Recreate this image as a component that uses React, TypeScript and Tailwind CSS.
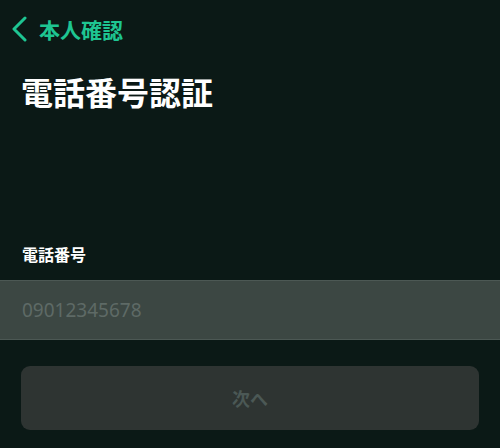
import React from "react";

const font = { fontFamily: '"Noto Sans CJK JP", "Noto Sans", sans-serif' };

const BackChevron = () => (
  <svg width="17" height="26" viewBox="0 0 17 26" fill="none" className="mr-[11px]">
    <path d="M14 2 L3 13 L14 24" stroke="#1ec592" strokeWidth="3" strokeLinecap="round" strokeLinejoin="round" />
  </svg>
);

export default function App() {
  return (
    <div className="w-[500px] h-[448px] bg-[#0b1916] overflow-hidden" style={font}>
      <div className="flex items-center pl-[11px] pt-[16px] h-[42px]">
        <BackChevron />
        <span className="text-[21px] font-bold text-[#1ec592] leading-none">本人確認</span>
      </div>

      <h1 className="px-[21px] mt-[33px] text-[32px] font-bold text-white leading-none">電話番号認証</h1>

      <label className="block px-[22px] mt-[139px] text-[16px] font-bold text-white leading-none">電話番号</label>

      <div className="mt-[18px] h-[60px] bg-[#3c4743] border-y border-[#4c5854] flex items-center px-[22px]">
        <span className="text-[19px] text-[#5e6a66] leading-none" style={{ fontFamily: '"Noto Sans", sans-serif' }}>
          09012345678
        </span>
      </div>

      <div className="px-[21px] mt-[26px]">
        <button className="w-full h-[64px] rounded-[9px] bg-[#2e3432] text-[18px] font-bold text-[#4b5855]">次へ</button>
      </div>
    </div>
  );
}
